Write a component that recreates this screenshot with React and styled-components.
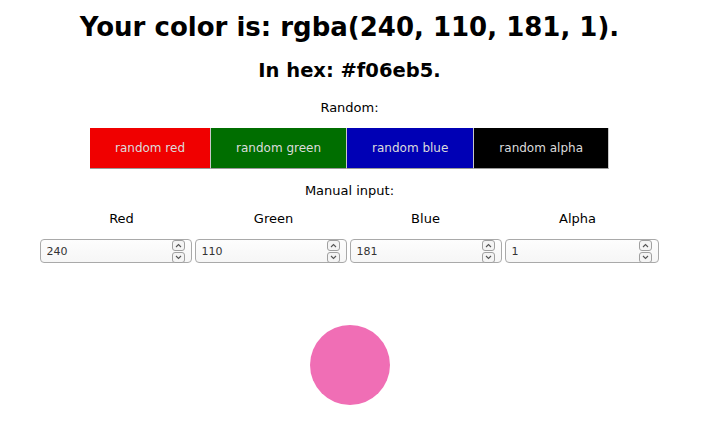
import React, { useState } from 'react'
import styled, { createGlobalStyle } from 'styled-components'

const Global = createGlobalStyle`
  body {
    margin: 0;
    background: #fff;
    font-family: "DejaVu Sans", sans-serif;
    font-size: 13px;
    color: #000;
  }
`

const Page = styled.div`
  width: 699px;
  text-align: center;
  padding-top: 12px;
`

const Title = styled.h1`
  font-size: 26px;
  margin: 0 0 17px;
`

const Hex = styled.h2`
  font-size: 19.5px;
  margin: 0 0 18px;
`

const Caption = styled.div`
  font-size: 13px;
  line-height: 15px;
`

const ButtonRow = styled.div`
  display: flex;
  justify-content: center;
  margin: 13px 0 14px;
`

const RandomBtn = styled.button`
  height: 41px;
  padding: 0 25px;
  border: 0;
  border-right: 1px solid #c8c8c8;
  border-bottom: 1px solid #9a9a9a;
  background: ${p => p.bg};
  color: #dcdcdc;
  font-family: "DejaVu Sans", sans-serif;
  font-size: 12px;
  cursor: pointer;
`

const LabelRow = styled.div`
  display: grid;
  grid-template-columns: repeat(4, 152px);
  justify-content: center;
  margin-top: 13px;
`

const Label = styled.div`
  font-size: 13px;
  line-height: 15px;
`

const InputRow = styled.div`
  display: grid;
  grid-template-columns: 152px 152px 152px 154px;
  column-gap: 3px;
  justify-content: center;
  margin: 13px 0 0;
  padding-right: 1px;
`

const Field = styled.div`
  display: flex;
  align-items: center;
  height: 22px;
  border: 1px solid #a9a9a9;
  border-radius: 4px;
  background: linear-gradient(#fdfdfd, #f6f6f6);
  padding-left: 6px;
  padding-right: 6px;
`

const NumInput = styled.input`
  flex: 1;
  min-width: 0;
  border: 0;
  outline: none;
  background: transparent;
  font-family: "DejaVu Sans", sans-serif;
  font-size: 11px;
  color: #333;
  padding: 0;
  text-align: left;
`

const Spinner = styled.div`
  display: flex;
  flex-direction: column;
  gap: 1px;
`

const SpinBtn = styled.div`
  width: 11px;
  height: 9px;
  border: 1px solid #a0a0a0;
  border-radius: 3px;
  background: #f4f4f4;
  display: flex;
  align-items: center;
  justify-content: center;
`

const Swatch = styled.div`
  width: 80px;
  height: 80px;
  border-radius: 50%;
  margin: 62px auto 0;
`

const Chevron = ({ up }) => (
  <svg width="7" height="5" viewBox="0 0 7 5">
    <path
      d={up ? 'M1 4 L3.5 1.5 L6 4' : 'M1 1 L3.5 3.5 L6 1'}
      fill="none"
      stroke="#555"
      strokeWidth="1.1"
    />
  </svg>
)

const toHex = (r, g, b) =>
  '#' + [r, g, b].map(v => Number(v).toString(16).padStart(2, '0')).join('')

export default function App() {
  const [c, setC] = useState({ r: 240, g: 110, b: 181, a: 1 })

  const rnd = key => () =>
    setC({ ...c, [key]: key === 'a' ? Math.round(Math.random() * 100) / 100 : Math.floor(Math.random() * 256) })

  const fields = [
    ['Red', 'r'],
    ['Green', 'g'],
    ['Blue', 'b'],
    ['Alpha', 'a'],
  ]

  return (
    <Page>
      <Global />
      <Title>
        Your color is: rgba({c.r}, {c.g}, {c.b}, {c.a}).
      </Title>
      <Hex>In hex: {toHex(c.r, c.g, c.b)}.</Hex>
      <Caption>Random:</Caption>
      <ButtonRow>
        <RandomBtn bg="#f00000" onClick={rnd('r')}>random red</RandomBtn>
        <RandomBtn bg="#006e00" onClick={rnd('g')}>random green</RandomBtn>
        <RandomBtn bg="#0000b5" onClick={rnd('b')}>random blue</RandomBtn>
        <RandomBtn bg="#000" onClick={rnd('a')}>random alpha</RandomBtn>
      </ButtonRow>
      <Caption>Manual input:</Caption>
      <LabelRow>
        {fields.map(([name]) => (
          <Label key={name}>{name}</Label>
        ))}
      </LabelRow>
      <InputRow>
        {fields.map(([name, key]) => (
          <Field key={key}>
            <NumInput
              value={c[key]}
              onChange={e => setC({ ...c, [key]: e.target.value })}
            />
            <Spinner>
              <SpinBtn><Chevron up /></SpinBtn>
              <SpinBtn><Chevron /></SpinBtn>
            </Spinner>
          </Field>
        ))}
      </InputRow>
      <Swatch style={{ background: `rgba(${c.r}, ${c.g}, ${c.b}, ${c.a})` }} />
    </Page>
  )
}
